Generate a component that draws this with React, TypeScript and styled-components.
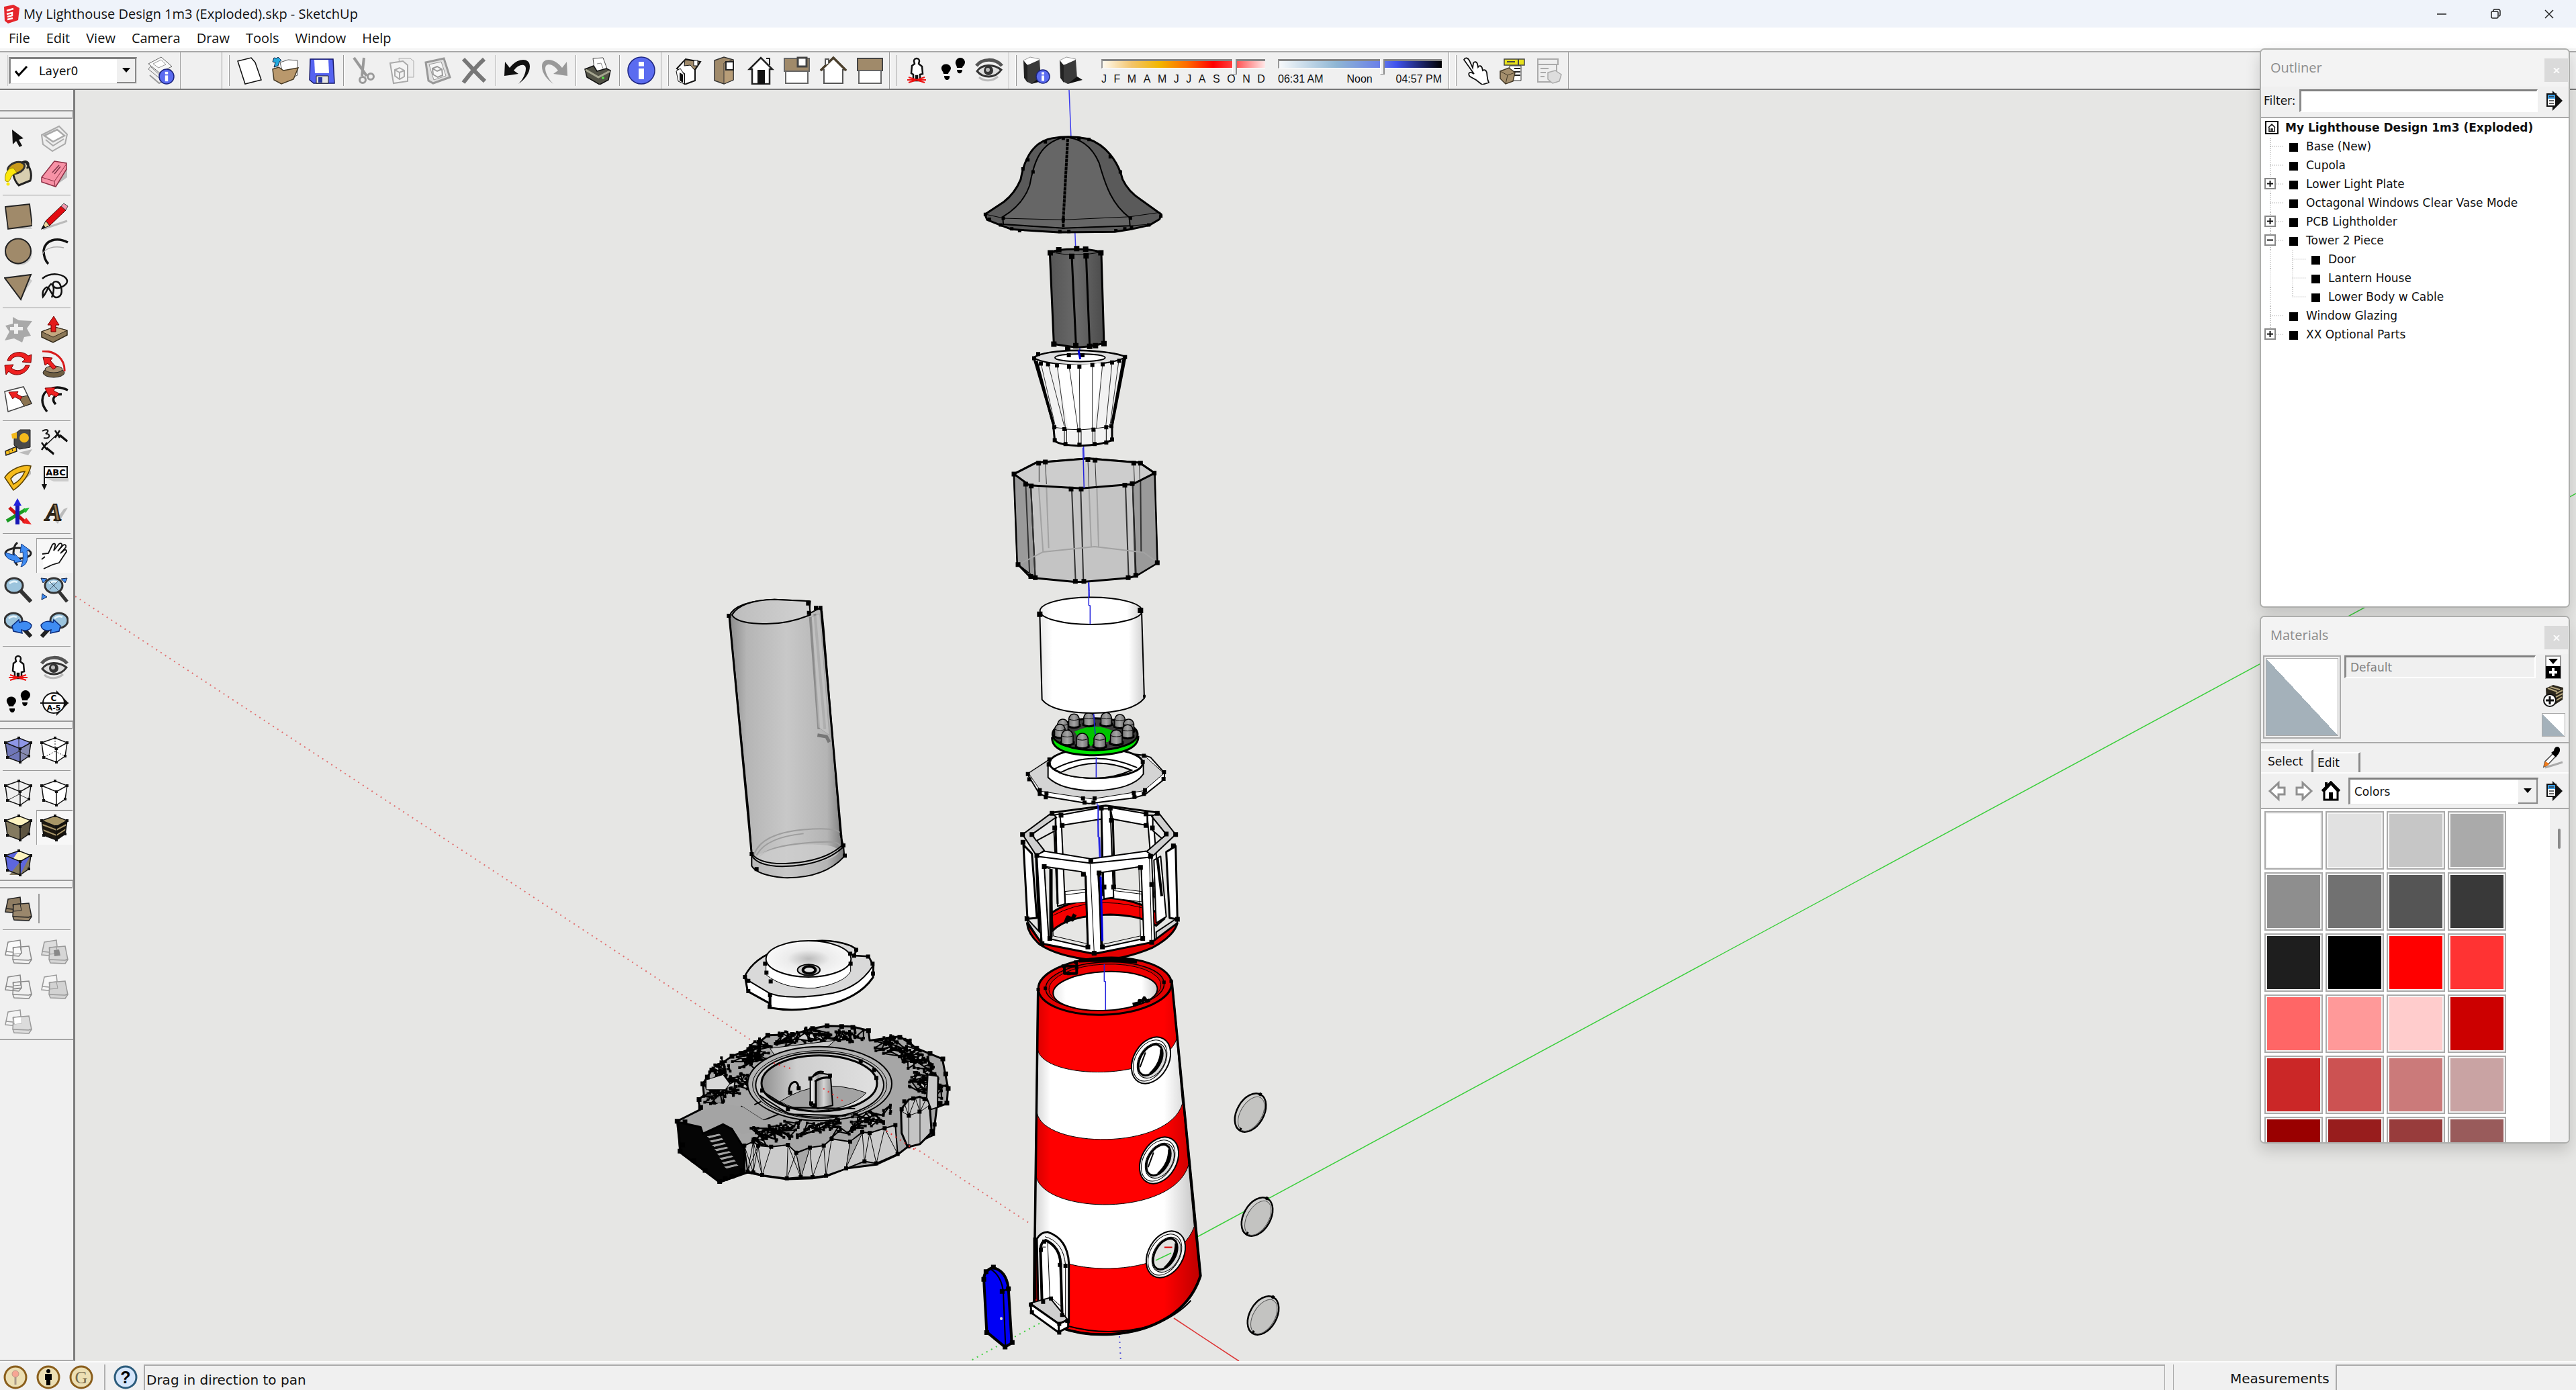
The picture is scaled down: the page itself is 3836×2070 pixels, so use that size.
import React from "react";
import styled, { createGlobalStyle } from "styled-components";

const ui = `"Open Sans", "Noto Sans", sans-serif`;
const dialog = `"DejaVu Sans", "Open Sans", sans-serif`;

const Global = createGlobalStyle`
  * { box-sizing: border-box; }
  html, body { margin: 0; padding: 0; }
  body { font-family: ${ui}; font-size: 19px; color: #111; background: #f0f0f0; overflow: hidden; }
  button { border: 0; padding: 0; margin: 0; background: none; font: inherit; color: inherit; display: flex; align-items: center; justify-content: center; }
  svg { display: block; flex: none; }
`;

/* ---------- shell ---------- */
const Shell = styled.div`
  position: relative;
  display: flex;
  flex-direction: column;
  height: 100vh;
`;
const TitleBar = styled.header`
  display: flex;
  align-items: center;
  height: 41px;
  padding-left: 5px;
  background: #eff3fa;
`;
const Title = styled.h1`
  flex: 1;
  margin: 0 0 0 6px;
  font-size: 20px;
  line-height: 28px;
  font-weight: 400;
`;
const WinButton = styled.button`
  width: 80px;
  height: 40px;
`;
const MenuBar = styled.nav`
  display: flex;
  gap: 24px;
  height: 31px;
  padding-left: 13px;
  align-items: center;
  background: #fff;
`;
const MenuItem = styled.button`
  font-size: 20px;
  line-height: 28px;
`;
const ToolStrip = styled.div`
  display: flex;
  height: 62px;
  padding-top: 2px;
  background: #f0f0f0;
  border-top: 4px solid #f5f5f5;
  border-bottom: 2px solid #777;
  box-shadow: inset 0 2px 0 #a8a8a8;
`;
const ToolGroup = styled.div`
  display: flex;
  align-items: center;
  padding-right: 2px;
  border-right: 1px solid #9a9a9a;
  box-shadow: 1px 0 0 #fff;
`;
const Grip = styled.span`
  align-self: stretch;
  width: 2px;
  margin: 4px 2px 4px 9px;
  background: #fff;
  border-right: 1px solid #9a9a9a;
`;
const ToolButton = styled.button`
  width: 54px;
  height: 52px;
`;
const Divider = styled.span`
  width: 1px;
  height: 46px;
  margin: 0 5px;
  background: #9a9a9a;
  box-shadow: 1px 0 0 #fff;
`;
const Spacer = styled.span`
  width: 8px;
`;
const EmptyDock = styled.div`
  width: 62px;
  border-right: 1px solid #9a9a9a;
`;
const Combo = styled.div<{ $w?: number }>`
  display: flex;
  align-items: center;
  width: ${(p) => (p.$w ? p.$w + "px" : "auto")};
  flex: ${(p) => (p.$w ? "none" : "1")};
  height: 40px;
  padding-left: 6px;
  background: #fff;
  border: 1px solid #e4e4e4;
  border-top: 3px solid #808080;
  border-left: 3px solid #909090;
`;
const ComboSelect = styled.select`
  appearance: none;
  flex: 1;
  min-width: 0;
  height: 34px;
  padding: 0;
  border: 0;
  background: transparent;
  font-family: ${dialog};
  font-size: 17px;
  color: #111;
`;
const ComboArrow = styled.span`
  display: flex;
  align-items: center;
  justify-content: center;
  width: 29px;
  align-self: stretch;
  background: #f0f0f0;
  border-right: 2px solid #8a8a8a;
  border-bottom: 2px solid #8a8a8a;
  pointer-events: none;
`;
const Check = styled.span`
  width: 36px;
`;
const SliderBlock = styled.div<{ $gap: number }>`
  display: flex;
  flex-direction: column;
  width: 244px;
  margin-left: ${(p) => p.$gap}px;
  padding-top: 4px;
`;
const Slider = styled.input<{ $grad: string }>`
  appearance: none;
  display: block;
  width: 100%;
  height: 22px;
  margin: 0;
  background: none;
  &::-webkit-slider-runnable-track {
    height: 14px;
    margin-bottom: 8px;
    background: linear-gradient(90deg, ${(p) => p.$grad});
    border-top: 3px solid #858585;
    border-left: 2px solid #999;
    border-bottom: 1px solid #fff;
  }
  &::-webkit-slider-thumb {
    appearance: none;
    width: 7px;
    height: 23px;
    margin-top: -3px;
    background: #f0f0f0;
    border-left: 1px solid #fff;
    border-right: 2px solid #8a8a8a;
    border-bottom: 1px solid #8a8a8a;
  }
`;
const SliderScale = styled.div`
  display: flex;
  justify-content: space-between;
  font-family: "Liberation Sans", Arial, sans-serif;
  font-size: 16px;
  line-height: 16px;
`;
const Workspace = styled.div`
  display: flex;
  flex: 1;
  min-height: 0;
`;
const Rail = styled.aside`
  width: 112px;
  flex: none;
  background: #f0f0f0;
  border-right: 3px solid #7d7d7d;
  border-bottom: 2px solid #aaa;
`;
const RailTop = styled.div`
  height: 30px;
`;
const RailGrip = styled.div`
  height: 15px;
  margin-bottom: 2px;
  border-top: 2px solid #9a9a9a;
  &::after {
    content: "";
    display: block;
    height: 9px;
    margin-right: 1px;
    border-bottom: 2px solid #9a9a9a;
    border-right: 1px solid #9a9a9a;
  }
`;
const RailRow = styled.div`
  display: flex;
  height: 52px;
`;
const RailButton = styled.button<{ $on?: boolean }>`
  width: 54px;
  height: 52px;
  background: ${(p) => (p.$on ? "#f7f7f7" : "none")};
  box-shadow: ${(p) => (p.$on ? "inset 1px 2px 0 #a0a0a0" : "none")};
`;
const RailRule = styled.div`
  height: 12px;
  margin: 0 4px;
  padding-top: 5px;
  &::after {
    content: "";
    display: block;
    height: 1px;
    background: #999;
  }
`;
const RailBar = styled.span`
  width: 2px;
  height: 44px;
  margin: 4px 0 0 3px;
  background: #999;
`;
const RailEnd = styled.div`
  border-top: 2px solid #a5a5a5;
`;
const Canvas = styled.main`
  flex: 1;
  min-width: 0;
  overflow: hidden;
  background: #e6e6e4;
  svg { width: 100%; height: 100%; }
`;
const StatusBar = styled.footer`
  display: flex;
  height: 43px;
  border-top: 2px solid #fbfbfb;
  padding: 3px 0 0 5px;
  background: #f0f0f0;
  font-family: ${dialog};
  font-size: 20px;
  line-height: 42px;
`;
const StatusButton = styled.button`
  width: 36px;
  height: 38px;
  margin-right: 13px;
`;
const StatusDivider = styled.span`
  width: 2px;
  margin: 0 12px 0 3px;
  background: #b0b0b0;
`;
const Hint = styled.output`
  flex: 1;
  margin-left: -4px;
  padding-left: 2px;
  border-left: 2px solid #aaa;
  border-top: 2px solid #aaa;
  border-right: 1px solid #aaa;
`;
const Measure = styled.label`
  display: flex;
  width: 600px;
  margin-left: 12px;
  padding-left: 84px;
  gap: 9px;
  border-left: 1px solid #aaa;
`;
const MeasureInput = styled.input`
  flex: 1;
  min-width: 0;
  background: #f0f0f0;
  border: 0;
  border-left: 2px solid #aaa;
  border-top: 2px solid #aaa;
`;

/* ---------- floating palettes ---------- */
const Palettes = styled.div`
  position: absolute;
  top: 72px;
  right: 9px;
  width: 462px;
  display: flex;
  flex-direction: column;
  gap: 12px;
  font-family: ${dialog};
  font-size: 17px;
`;
const Palette = styled.section<{ $h: number }>`
  display: flex;
  flex-direction: column;
  height: ${(p) => p.$h}px;
  overflow: hidden;
  background: #f0f0f0;
  border: 2px solid #adaeac;
  border-radius: 7px;
  box-shadow: 0 10px 22px rgba(0, 0, 0, 0.16);
`;
const PaletteHead = styled.div`
  display: flex;
  justify-content: space-between;
  height: 55px;
  flex: none;
  padding: 13px 1px 0 14px;
  background: #f3f3f3;
`;
const PaletteTitle = styled.h2`
  margin: 0;
  font-family: ${ui};
  font-weight: 400;
  font-size: 20px;
  line-height: 28px;
  color: #8c8c8c;
`;
const Close = styled.button`
  width: 35px;
  height: 35px;
  background: #dadada;
  color: #f7f7f7;
`;
const FilterRow = styled.div`
  display: flex;
  align-items: center;
  height: 47px;
  flex: none;
  padding: 0 9px 4px 4px;
  border-bottom: 2px solid #aaa;
`;
const FilterLabel = styled.label`
  display: flex;
  flex: 1;
  align-items: center;
  gap: 5px;
  margin-right: 13px;
`;
const Field = styled.input<{ $off?: boolean }>`
  flex: 1;
  min-width: 0;
  height: 34px;
  padding: 0 6px;
  background: ${(p) => (p.$off ? "#f0f0f0" : "#fff")};
  border: 2px solid #fff;
  border-top: 3px solid #808080;
  border-left: 3px solid #8a8a8a;
  font-family: ${dialog};
  font-size: 17px;
  color: ${(p) => (p.$off ? "#808080" : "#111")};
`;
const Tree = styled.ul`
  flex: 1;
  margin: 0;
  padding: 0;
  list-style: none;
  background: #fff;
`;
const Root = styled.li`
  display: flex;
  align-items: center;
  gap: 10px;
  height: 28px;
  padding-left: 6px;
  font-weight: 700;
`;
const Node = styled.li`
  display: flex;
  align-items: center;
  height: 28px;
`;
const Bullet = styled.span`
  width: 13px;
  height: 13px;
  margin: 3px 12px 0 8px;
  background: #000;
`;
const MatTop = styled.div`
  display: flex;
  height: 133px;
  flex: none;
  padding: 2px 5px 0 3px;
  border-bottom: 2px solid #aaa;
`;
const Preview = styled.div`
  width: 116px;
  height: 124px;
  padding: 2px;
  border: 2px solid #aaa;
  background: #f0f0f0;
`;
const Split = styled.div`
  width: 100%;
  height: 100%;
  border: 1px solid #aaa;
  background: linear-gradient(to top right, #a4b1ba 50%, #fff 50%);
`;
const NameSlot = styled.div`
  display: flex;
  flex: 1;
  align-items: flex-start;
  padding: 0 8px 0 5px;
`;
const SideIcons = styled.div`
  display: flex;
  flex-direction: column;
  align-items: center;
  gap: 8px;
  width: 36px;
`;
const MiniSplit = styled.button`
  width: 35px;
  height: 35px;
`;
const Tabs = styled.div`
  display: flex;
  align-items: flex-end;
  height: 45px;
  flex: none;
  border-bottom: 2px solid #fdfdfd;
`;
const Tab = styled.button<{ $on?: boolean }>`
  justify-content: flex-start;
  width: ${(p) => (p.$on ? 78 : 70)}px;
  height: ${(p) => (p.$on ? 34 : 30)}px;
  padding-left: ${(p) => (p.$on ? 10 : 6)}px;
  border-top: 2px solid #fdfdfd;
  border-right: 3px solid #8a8a8a;
`;
const Dropper = styled.button`
  width: 34px;
  height: 36px;
  margin: 0 6px 4px auto;
`;
const NavRow = styled.div`
  display: flex;
  align-items: center;
  height: 53px;
  flex: none;
  padding: 0 9px 0 10px;
  gap: 12px;
  border-bottom: 2px solid #aaa;
`;
const SwatchArea = styled.div`
  display: flex;
  flex: 1;
  min-height: 0;
  background: #fff;
`;
const SwatchGrid = styled.div`
  flex: 1;
  display: grid;
  grid-template-columns: repeat(4, 87px);
  grid-auto-rows: 87px;
  gap: 4px;
  padding: 3px 0 0 5px;
`;
const Swatch = styled.button<{ $c: string }>`
  background: ${(p) => p.$c};
  border: 2px solid #aaa;
  box-shadow: inset 0 0 0 2px #f4f4f4;
`;
const Scroll = styled.div`
  width: 28px;
  padding: 29px 0 0 12px;
  background: #f0f0f0;
  &::after {
    content: "";
    display: block;
    width: 4px;
    height: 30px;
    border-radius: 2px;
    background: #8a8a8a;
  }
`;

/* ---------- icons ---------- */
const K = "#111";
const tan = "#a08a6a";
const houseIso = (
  <>
    <path d="M4 18L17 4l22 4-8 12v16l-16 6V26z" fill="#fff" stroke={K} strokeWidth="2" />
    <path d="M16 5l22 3-8 12-6-7-9 1z" fill={tan} stroke={K} />
    <path d="M15 41V27L9 18 3 22l3 15z" fill="#fff" stroke={K} />
    <path d="M8 24l5 3v12l-5-3z" fill={K} />
    <path d="M29 6h6v8h-6z" fill="#fff" stroke={K} />
  </>
);
const foot = (
  <>
    <path d="M4 16c2-6 12-6 14 1 0 5-4 6-4 9H7c0-4-4-5-3-10zM8 29h8c1 8-8 8-8 0z" />
    <path d="M25 8c2-8 12-8 14 0 0 6-4 6-4 9h-8c0-4-3-5-2-9zM27 20h8c0 7-8 7-8 0z" />
  </>
);
const eye = (
  <>
    <path d="M2 14C10 3 30 2 40 14" fill="none" stroke="#555" strokeWidth="5" />
    <path d="M3 22C10 11 28 11 39 20 30 33 12 33 3 22z" fill="#ddd" stroke="#333" strokeWidth="3" />
    <circle cx="20" cy="21" r="7" fill="#333" /><circle cx="19" cy="20" r="3" fill="#bbb" />
    <path d="M6 31c8 7 20 6 28-1" fill="none" stroke="#bbb" strokeWidth="3" />
  </>
);
const person = (
  <>
    <path d="M17 7a4 4 0 018 0l-1 4 5 4 1 11-4 1v9h-4v-7h-2v7h-4v-9l-3-2 1-11 4-3z" fill="#fff" stroke={K} strokeWidth="2.5" />
    <path d="M9 39l24-8M9 31l24 8M7 35h28" stroke="#e11" strokeWidth="2" fill="none" />
  </>
);
const cube = (top: string, l: string, r: string, inner?: React.ReactNode) => (
  <>
    <path d="M2 11L24 4l16 7-16 9z" fill={top} /><path d="M2 11l22 9v20L5 33z" fill={l} /><path d="M24 20l16-9-3 20-13 9z" fill={r} />
    {inner}
    <path d="M2 11L22 4l18 7-16 9zM24 20v20L5 33 2 11M40 11l-3 20-13 9" fill="none" stroke={K} strokeWidth="1.5" />
    <path d="M0 9h4v4H0zM20 2h4v4h-4zM38 9h4v4h-4zM22 18h4v4h-4zM22 38h4v4h-4zM3 31h4v4H3zM35 29h4v4h-4z" fill={K} />
  </>
);
const slabs = (a: string, b: string, s: string, x?: React.ReactNode) => (
  <>
    <path d="M6 7l18-3 2 19-4 5-20-2 1-5z" fill={a} stroke={s} strokeWidth="1.5" />
    <path d="M14 15l23-2 4 20-4 6-22-1-2-5z" fill={b} stroke={s} strokeWidth="1.5" />
    <path d="M13 33l24 1 4-2M3 21l10 1" fill="none" stroke={s} strokeWidth="1.5" />
    <path d="M13 15l11-1 2 10-12 1z" fill="none" stroke={s} />
    {x}
  </>
);
const glass = (cx: number) => (
  <>
    <ellipse cx={cx} cy="14" rx="13" ry="11" fill="#9cc4dd" stroke="#333" strokeWidth="3" />
    <path d={`M${cx - 7} 11q5-5 12-2`} stroke="#e6f4fb" strokeWidth="2.5" fill="none" />
  </>
);
const info = (cx: number, cy: number, rx: number, ry: number) => (
  <>
    <ellipse cx={cx} cy={cy} rx={rx} ry={ry} fill="#5b6cf0" stroke="#1d2580" strokeWidth="1.5" />
    <rect x={cx - rx / 5} y={cy - ry * 0.65} width={rx / 2.5} height={ry / 3} fill="#fff" />
    <rect x={cx - rx / 5} y={cy - ry * 0.15} width={rx / 2.5} height={ry * 0.8} fill="#fff" />
  </>
);
const shadowBox = (
  <>
    <path d="M2 6l10-5 14 3-3 7-16 2z" fill="#fff" stroke="#999" /><path d="M2 6l6 7v26l-5-7z" fill="#222" />
    <path d="M8 13l18-8 2 28-14 8-6-3z" fill="#3a3a3a" /><path d="M14 41l22-6-8-5z" fill="#111" />
  </>
);
const icons: Record<string, React.ReactNode> = {
  layers: (<>
    <path d="M3 11L22 1l16 14-19 9z" fill="#f8f8f8" stroke="#666" /><path d="M3 19l17 14 19-10-4-4-16 8L6 15z" fill="#eee" stroke="#777" />
    <path d="M5 28l14 12 10-6" fill="none" stroke="#999" strokeWidth="2" /><path d="M10 11l12-6 7 7-11 5z" fill="#fff" stroke="#999" />{info(30, 30, 11, 11)}</>),
  newDoc: <path d="M4 7l20-5 6 7 9 26-24 6z" fill="#fff" stroke={K} strokeWidth="1.5" />,
  open: (<><path d="M13 9l12-4 14 1v22L20 36z" fill="#fff" stroke="#555" /><path d="M2 19l9-3 7 5 22-4-7 17-18 7L4 35z" fill="#b9986c" stroke="#463a25" strokeWidth="1.5" />
    <path d="M4 2l4 1 2-2 5 5-3 2-2 6-6 2 2-7-4-1z" fill="#23a9dd" stroke="#124" /></>),
  save: (<><path d="M4 4h34l2 36H9l-6-5z" fill="#5563f0" stroke="#15186b" strokeWidth="1.5" /><path d="M10 5h21l1 20H11z" fill="#fff" /><path d="M13 29h18v11H13z" fill="#e6e6e6" stroke="#222" /><path d="M16 31h6v8h-6z" fill="#2a38a0" /></>),
  cut: (<g stroke="#999" fill="none"><path d="M4 2l19 27M19 2l-3 27" strokeWidth="4" /><circle cx="17" cy="35" r="4.500" strokeWidth="3" /><circle cx="29" cy="30" r="4.500" strokeWidth="3" /></g>),
  copy: (<g stroke="#aaa" fill="#eee"><path d="M17 3h17l5 4v24H20z" /><path d="M4 10l19-3 7 6v24l-21 3z" fill="#f4f4f4" strokeWidth="2" /><path d="M11 20l7-3 7 4v9l-7 4-7-5zM11 20l7 4 7-3M18 24v9" fill="none" strokeWidth="2" /></g>),
  paste: (<g stroke="#999" fill="#e0e0e0"><path d="M3 9l27-6 9 28-25 9-7-4z" strokeWidth="3" /><path d="M8 12l18-4 7 21-18 6z" fill="#f6f6f6" /><path d="M13 18l7-3 7 4 1 9-7 3-7-4zM13 18l7 4 7-3" fill="none" strokeWidth="2" /></g>),
  del: <path d="M5 4c10 10 20 22 32 33M36 4C25 14 15 26 5 39" stroke="#777" strokeWidth="6" fill="none" />,
  undo: <path d="M9 17C20 2 39 1 39 15c0 10-8 20-17 26 8-8 11-17 11-23 0-8-11-7-18 3l7 5L1 29 2 8z" fill={K} />,
  redo: <path d="M33 17C22 2 3 1 3 15c0 10 8 20 17 26C12 33 8 24 8 18c0-9 11-8 19 3l-7 5 21 3-1-21z" fill="#999" />,
  print: (<><path d="M14 3l15-1 7 19-19 4z" fill="#fff" stroke="#444" /><path d="M20 11l6-1 3 8" stroke="#888" fill="none" /><path d="M2 19l13-5 5 8 14-4 6 3-3 14-13 7L5 31z" fill="#525246" stroke="#111" strokeWidth="1.5" /><path d="M3 20l19 11 17-9" fill="none" stroke="#a5a58f" strokeWidth="3" /><circle cx="29" cy="32" r="2" fill="#5d4" /></>),
  info: info(21, 21, 20, 20),
  iso: houseIso,
  top: (<><path d="M6 6l14-5 14 4v30l-14 6-14-5z" fill={tan} stroke="#333" strokeWidth="1.500" /><path d="M20 10l14-5v30l-14 6z" fill="#b79d78" stroke="#333" /><path d="M23 8h11v12H23z" fill="#fff" stroke="#222" strokeWidth="2" /></>),
  front: (<><path d="M4 19L21 2l17 17h-4v22H8V19z" fill="#fff" stroke="#222" strokeWidth="2.500" /><path d="M16 20h11v21H16z" fill={K} /><path d="M29 3h5v10" fill="none" stroke="#222" strokeWidth="2" /></>),
  right: (<><path d="M2 3h37v19H2z" fill={tan} stroke="#666" strokeWidth="2" /><path d="M4 22h33v18H4z" fill="#fff" stroke="#666" strokeWidth="2" /><path d="M22 2h13v13H22z" fill="#fff" stroke="#444" strokeWidth="3" /></>),
  back: (<><path d="M3 20L21 2l18 18h-4v20H7V20z" fill="#fff" stroke="#555" strokeWidth="2" /><path d="M2 21L21 2l19 19" fill="none" stroke="#4b3f2c" strokeWidth="3.500" /><path d="M9 13V4h5v6" fill="#fff" stroke="#555" strokeWidth="2" /></>),
  left: (<><path d="M3 3h37v18H3z" fill={tan} stroke="#444" strokeWidth="2" /><path d="M5 21h33v19H5z" fill="#fff" stroke="#666" strokeWidth="2" /></>),
  person, foot, eye,
  shadowInfo: <>{shadowBox}{info(31, 30, 10, 10)}</>,
  shadow: shadowBox,
  interact: <path d="M3 5c2-4 6-3 8 1l5 11 1-7c2-3 5-2 6 1l1 5c2-3 5-2 6 1l1 4c3-2 5 0 6 3 1 6 0 9 3 15l-10 3-9-7-9-5c-3-3-2-7 2-6l4 2z" fill="#fff" stroke={K} strokeWidth="1.800" />,
  attrs: (<><path d="M9 4h30v9H9z" fill="#e7e11d" stroke="#444" strokeWidth="1.500" /><path d="M30 4v9M13 8h12" stroke="#444" strokeWidth="2" /><path d="M17 14h17v22H17z" fill="#fff" stroke="#333" /><path d="M24 18h9M24 23h9M24 28h9" stroke="#222" strokeWidth="2" /><path d="M3 22l13-5 9 7-3 13-11 4-8-8z" fill="#a58f6d" stroke="#443a28" strokeWidth="1.500" /><path d="M3 22l11 6 11-4M14 28l-3 13" stroke="#443a28" fill="none" /></>),
  outline: (<g stroke="#aaa" fill="#eee"><path d="M5 4h30v8H5z" strokeWidth="2" /><path d="M5 12h28v26H5z" strokeWidth="2" /><path d="M9 18h12M9 24h8M9 30h6" strokeWidth="2" /><path d="M20 24l11-3 9 6-3 10-10 3-7-6z" fill="#ddd" strokeWidth="1.500" /></g>),
  arrow: <path d="M12 7l17 13-7 2 5 9-4 2-5-9-5 5z" fill={K} />,
  component: (<g fill="#fff" stroke="#aaa"><path d="M2 15L28 2l12 12-3 14-19 11L4 29z" strokeWidth="2" fill="#eee" /><path d="M6 16L25 7l11 9-17 9z" strokeWidth="2.500" /><path d="M8 22l11 9 16-10" fill="none" strokeWidth="2" /></g>),
  paint: (<><path d="M14 8l18-5c8 9 10 20 7 28l-17 7C14 30 12 18 14 8z" fill="#d8cfb0" stroke="#222" strokeWidth="3" /><ellipse cx="18" cy="12" rx="13" ry="8" transform="rotate(-20 18 12)" fill="#c99a1c" stroke="#333" strokeWidth="3" /><path d="M14 12C4 12 0 24 2 31c3 3 6 2 8-4 2-5 5-6 9-8z" fill="#fbe70d" stroke="#998900" /><circle cx="6" cy="36" r="2.500" fill="#fbe70d" /><path d="M26 4c8-4 14 0 8 9" fill="none" stroke="#222" strokeWidth="2.500" /></>),
  eraser: (<><path d="M22 39l18-13V12z" fill="#bbb" /><path d="M2 26L21 2l18 3v9L23 40 2 33z" fill="#f792a6" stroke="#8d2f44" strokeWidth="1.500" /><path d="M2 26l19 6L39 6M21 32l1 8" fill="none" stroke="#8d2f44" /><path d="M18 19l10-11M21 21l9-11" stroke="#7d3548" strokeWidth="1.500" /></>),
  rect: (<><path d="M8 39h34l-3-4z" fill="#ccc" /><path d="M2 6l36-4 4 32-36 5z" fill={tan} stroke="#222" strokeWidth="1.800" /></>),
  pencil: (<><path d="M4 39l36-12" stroke="#bbb" strokeWidth="3" /><path d="M8 27L31 5l7 6-24 23z" fill="#e30c12" stroke="#400" /><path d="M31 5l4-4 6 4-3 6z" fill="#f19ab0" stroke="#444" /><path d="M8 27l6 7-12 5z" fill="#ecd59b" stroke="#222" /><path d="M1 40l7-3-3-4z" fill={K} /></>),
  circle: <><ellipse cx="23" cy="23" rx="19" ry="18" fill="#ccc" /><ellipse cx="21" cy="20" rx="19" ry="18.500" fill={tan} stroke="#222" strokeWidth="2" /></>,
  arc: <><path d="M41 7C24-2 7 4 5 19c0 9 2 15 7 20" fill="none" stroke={K} strokeWidth="3.500" /><path d="M3 25c4-10 18-13 32-10" stroke="#aaa" fill="none" strokeWidth="1.500" /></>,
  poly: <><path d="M28 33l14-21-5-4z" fill="#ccc" /><path d="M1 8l39-5-15 37z" fill={tan} stroke="#222" strokeWidth="2" /></>,
  freehand: <path d="M3 9C16-2 38 2 40 12c1 8-18 16-21 7-2-7 8-8 11 0 4 10 1 18-7 18-6-1-9-17-14-15-5 3-6 9-5 14 5-6 8-16 12-19 6 2 4 14 1 20" fill="none" stroke={K} strokeWidth="2.500" />,
  move: <path d="M13 2l9 5 20 1-8 11 6 11-10 2-3 8-12-6-14 3 7-13-6-9 11-3zM15 12h6v5h7v5h-7v5h-6v-5H9v-5h6z" fill="#a9a9a9" fillRule="evenodd" />,
  push: (<><path d="M2 24l19-7 19 5v7l-21 11L2 32z" fill="#8b7757" stroke="#332a1a" strokeWidth="1.500" /><path d="M2 24l19-7 19 5-21 10z" fill="#c4a880" stroke="#332a1a" /><path d="M20 1l8 13h-5v10h-7V14h-5z" fill="#e31b1b" stroke="#700" /></>),
  rotate: (<><path d="M5 15C9 0 29 0 36 8l5-2-1 12-13-1 4-4C24 6 13 8 10 15z" fill="#ee2020" stroke="#700" /><path d="M38 22C33 37 15 40 7 31l-4 5-2-14 13-1-3 5c6 6 18 5 21-4z" fill="#ee2020" stroke="#700" /></>),
  follow: (<><ellipse cx="20" cy="33" rx="16" ry="7" fill="#6f5e42" stroke="#222" /><ellipse cx="20" cy="28" rx="13" ry="5" fill="#a89070" stroke="#222" /><path d="M3 1c20-1 34 12 33 30" stroke="#d81b1b" strokeWidth="3" fill="none" /><path d="M4 10l14 1-3 4 9 10-5 3-8-9-4 3z" fill="#ee2020" stroke="#700" /></>),
  scale: (<><path d="M1 9l28-7 12 25-35 12z" fill="#fff" stroke="#444" strokeWidth="1.500" /><path d="M22 18l13-3 6 12-11 4z" fill="#8b7451" stroke="#222" /><path d="M7 10l14-1-2 4 8 4-3 4-8-4-3 3z" fill="#ee2020" stroke="#700" /></>),
  offset: (<><path d="M41 7C20-3 3 8 3 22c0 7 3 12 7 17M32 13c-12 0-16 8-9 15" fill="none" stroke={K} strokeWidth="3.500" /><path d="M7 4l15-1-2 5 8 4-4 5-8-4-3 4z" fill="#ee2020" stroke="#700" /></>),
  tape: (<><path d="M22 36l20-5-6 9z" fill="#bbb" /><path d="M15 9l9-7h15v26l-16 3-8-6z" fill="#4a4a4a" stroke="#222" /><circle cx="30" cy="14" r="7" fill="#f5ba1c" /><path d="M11 8l8-2v9h-7z" fill="#f5ba1c" /><path d="M2 34l16-7 1 7-16 6z" fill="#f9c01c" stroke="#222" strokeWidth="1.500" /><path d="M7 33l1 3M12 31l1 3" stroke="#222" /></>),
  dimension: (<><path d="M3 4c7-4 12-1 5 4 8-1 7 9-3 6" fill="none" stroke={K} strokeWidth="2" /><path d="M6 27L26 8l14 12M6 27l14 12" fill="none" stroke={K} strokeWidth="1.500" /><path d="M29 10l11 9M9 29l11 9" stroke={K} strokeWidth="3.500" /><path d="M22 3l7 11M29 3l-7 11M2 21l8 11M10 21l-8 11" stroke={K} strokeWidth="2.500" /></>),
  protractor: (<><path d="M18 37l22-21v-5z" fill="#bbb" /><path d="M14 40L1 21C8 10 26 1 40 4 37 18 26 32 14 40zm0-9c8-4 14-12 17-19-9 1-17 5-21 11z" fill="#f5bb1c" fillRule="evenodd" stroke="#5a4100" strokeWidth="1.500" /></>),
  text: (<><path d="M8 22h34v5H20z" fill="#ccc" /><path d="M6 5h34v16H6z" fill="#fff" stroke={K} strokeWidth="2" /><path d="M6 21v12" stroke={K} strokeWidth="2" /><path d="M2 31h8l-4 9z" fill={K} /><text x="23" y="18" fontSize="13" fontWeight="700" textAnchor="middle" fontFamily="DejaVu Sans">ABC</text></>),
  axes: (<><path d="M8 14l24 22" stroke="#c11" strokeWidth="5" /><path d="M41 39l-14-2 6-8z" fill="#e22" /><path d="M4 34l28-17" stroke="#1a9a22" strokeWidth="5" /><path d="M38 14l-6 8-4-6z" fill="#2b3" /><path d="M20 8v31" stroke="#1717b5" strokeWidth="6" /><path d="M20 0l6 11H14z" fill="#22d" /></>),
  text3d: (<><path d="M26 38l15-24-6 2-13 18z" fill="#bbb" /><text x="20" y="33" fontSize="36" fontWeight="700" fontStyle="italic" textAnchor="middle" fontFamily="Liberation Serif" fill="#9c7e54" stroke="#2a2216" strokeWidth="2">A</text></>),
  orbit: (<><ellipse cx="21" cy="18" rx="19" ry="8" fill="none" stroke="#222" strokeWidth="3" /><path d="M20 2c-8 6-8 26 0 34" fill="none" stroke="#222" strokeWidth="3" /><path d="M2 17l14 4-2-4 13 13-12 2 1-3C7 28 2 24 2 17z" fill="#3f8cf3" stroke="#113b86" /><path d="M26 4l12 9-4 1c3 12 0 22-9 24 3-6 4-14 3-22l-4 1z" fill="#3f8cf3" stroke="#113b86" /></>),
  pan: <path d="M3 19l9-1 6-13c3-3 5-1 4 2L20 14 28 4c3-2 5 0 4 3l-6 8L34 6c3-2 5 0 4 3l-8 9 6-5c3-1 4 2 2 4L28 32l-10 3-13 6M2 27l5-4" fill="#fff" stroke={K} strokeWidth="1.800" />,
  zoom: <><path d="M25 22l15 16" stroke="#333" strokeWidth="6" />{glass(15)}</>,
  zoomExt: <><path d="M27 22l13 16" stroke="#333" strokeWidth="5" />{glass(20)}<path d="M14 8l12 12M26 8L14 20" stroke="#456" /><path d="M1 3l9 1-6 6zM40 3l-9 1 6 6zM2 35l1-9 7 5z" fill="#3f8cf3" stroke="#124" /></>,
  prev: <><path d="M25 22l15 16" stroke="#222" strokeWidth="6" />{glass(14)}<path d="M12 22l10-9 1 4c7-3 14-2 18 4-1 8-9 9-15 7l1 5-13-3z" fill="#3f8cf3" stroke="#0b2c7c" strokeWidth="1.500" /></>,
  next: <><path d="M17 22L2 38" stroke="#222" strokeWidth="6" />{glass(28)}<path d="M30 22L20 13l-1 4C12 14 5 15 1 21c1 8 9 9 15 7l-1 5 13-3z" fill="#3f8cf3" stroke="#0b2c7c" strokeWidth="1.500" /></>,
  section: (<><path d="M24 2l18 19-18 19z" fill={K} /><ellipse cx="20" cy="21" rx="16" ry="15" fill="#fff" stroke={K} strokeWidth="2" /><path d="M0 21h42" stroke={K} strokeWidth="2" /><text x="20" y="18" fontSize="12" fontWeight="700" textAnchor="middle" fontFamily="DejaVu Sans">C</text><text x="20" y="32" fontSize="11" fontWeight="700" textAnchor="middle" fontFamily="DejaVu Sans">A-5</text></>),
  xray: cube("#8f97e6", "#6f76b8", "#8589b0", <path d="M22 4v20L5 33M22 24l15 7" stroke="#333" fill="none" />),
  backEdges: cube("#fff", "#fff", "#fff", <path d="M22 4v20L5 33M22 24l15 7" stroke="#333" fill="none" strokeDasharray="2 2" />),
  wire: cube("none", "none", "none", <path d="M22 4v20L5 33M22 24l15 7" stroke="#333" fill="none" />),
  hidden: cube("#fff", "#fff", "#fff"),
  shaded: cube("#fdf3c0", "#847a60", "#5d5440"),
  textured: cube("#a99767", "#1d1810", "#16120b", <path d="M3 17l21 8 15-8M4 25l20 8 14-9" stroke="#a8966a" strokeWidth="2" fill="none" />),
  mono: cube("#fdf3c0", "#5d66dd", "#847a60", <><path d="M3 11l19-7-8 11zM24 20v20L39 11z" fill="#5d66dd" /><path d="M24 20v20H8z" fill="#847a60" /></>),
  outer: slabs("#8e7c62", "#9a876c", "#222"),
  s1: slabs("#fafafa", "none", "#888"),
  s2: slabs("#ddd", "#d6d6d6", "#999", <path d="M20 19l8-1 2 9-9 1z" fill="#888" />),
  s3: slabs("none", "none", "#888", <path d="M14 20l12-1M15 24l11-1" stroke="#888" />),
  s4: slabs("#f6f6f6", "#d3d3d3", "#999"),
  s5: slabs("#f4f4f4", "#dcdcdc", "#999", <path d="M15 16l10-1 1 9-10 1z" fill="#fff" />),
};
const Icon = ({ n }: { n: string }) => (
  <svg width="42" height="42" viewBox="0 0 42 42" aria-hidden="true">{icons[n]}</svg>
);
const Tool = ({ n }: { n: string }) => <ToolButton aria-label={n}><Icon n={n} /></ToolButton>;
const Arrow = () => <svg width="12" height="8" viewBox="0 0 12 8"><path d="M0 0h12L6 7z" /></svg>;
const Details = () => (
  <svg width="24" height="30" viewBox="0 0 24 30">
    <path d="M9 0l15 15L9 30z" fill="#111" /><path d="M1 5h13v18H1z" fill="#fff" stroke="#111" strokeWidth="2" />
    <path d="M2 6h11v6H2z" fill="#3a9be0" /><path d="M4 9h7M4 15h7M4 19h7" stroke="#333" strokeWidth="1.500" />
  </svg>
);
const CloseMark = () => <svg width="10" height="8" viewBox="0 0 10 8"><path d="M1 0l8 8M9 0L1 8" stroke="#fafafa" strokeWidth="2" /></svg>;

/* ---------- model scene ---------- */
const V = { vectorEffect: "non-scaling-stroke" as const };
type LProps = { d: string; f?: string; s?: string; w?: number; dash?: string; o?: number };
const L = ({ d, f = "none", s = "#000", w = 1, dash, o }: LProps) => (
  <path d={d} fill={f} stroke={s} strokeWidth={w} strokeDasharray={dash} opacity={o} strokeLinejoin="round" {...V} />
);
const Dots = ({ p, w = 6 }: { p: string; w?: number }) => (
  <path d={p.trim().split(/\s+/).map((q) => `M${q.replace(",", " ")}h.01`).join("")} stroke="#000" strokeWidth={w} strokeLinecap="square" fill="none" {...V} />
);

const rocks = (line: number[][], half: number, count: number, seed: number) => {
  let r = seed;
  const rnd = () => ((r = (r * 16807) % 2147483647) / 2147483647);
  for (let i = 0; i < 5; i++) rnd();
  const out: { d: string; f: string; v: string }[] = [];
  for (let i = 0; i < count; i++) {
    const t = rnd() * (line.length - 1);
    const k = Math.floor(t);
    const a = line[k], b = line[Math.min(k + 1, line.length - 1)];
    const x = a[0] + (b[0] - a[0]) * (t - k);
    const y = a[1] + (b[1] - a[1]) * (t - k) + (rnd() - 0.5) * 2 * half;
    const q = [0, 1, 2].map(() => [Math.round(x + (rnd() - 0.5) * 84), Math.round(y + (rnd() - 0.5) * 30)]);
    out.push({
      d: `M${q[0]}L${q[1]}L${q[2]}Z`,
      f: ["#a0a0a0", "#b8b8b8", "#cecece", "#8e8e8e"][Math.floor(rnd() * 4)],
      v: q.map((c) => c.join(",")).join(" "),
    });
  }
  return out;
};
const Rocks = ({ line, half, count, seed }: { line: number[][]; half: number; count: number; seed: number }) => {
  const list = rocks(line, half, count, seed);
  return (<>
    {list.map((t, i) => <L key={i} d={t.d} f={t.f} w={2} />)}
    <Dots p={list.map((t) => t.v).join(" ")} w={4} />
  </>);
};

const topPts = [[385, 1442], [425, 1432], [447, 1442], [505, 1445], [580, 1440], [617, 1460], [678, 1447], [740, 1442], [775, 1425], [858, 1432], [912, 1408], [945, 1410], [1012, 1398], [1060, 1390]];
const botPts = [[400, 1508], [425, 1510], [465, 1517], [575, 1525], [637, 1522], [690, 1522], [750, 1518], [840, 1500], [922, 1482], [975, 1487], [1070, 1463]];
const zig = () => {
  let d = "";
  botPts.forEach((b) => {
    topPts.forEach((t) => { if (Math.abs(t[0] - b[0]) < 62) d += `M${t}L${b}`; });
  });
  return d;
};

const Base = () => (
  <g>
    <L d="M85 1380L190 1350 178 1325 205 1315 200 1285 240 1250 330 1215 405 1198 450 1180 490 1162 600 1160 690 1145 755 1138 870 1140 940 1150 945 1175 1040 1168 1080 1165 1155 1195 1270 1222 1295 1295 1290 1335 1245 1345 1230 1415 1115 1445 1070 1465 975 1490 840 1500 750 1520 690 1525 575 1527 465 1518 400 1510 275 1535 100 1460Z" f="#a6a6a6" w={3} />
    <Rocks line={[[235, 1298], [280, 1255], [400, 1220], [470, 1192]]} half={20} count={48} seed={1193} />
    <Rocks line={[[520, 1178], [640, 1162], [780, 1158], [900, 1162]]} half={8} count={36} seed={3141} />
    <Rocks line={[[1000, 1190], [1080, 1190], [1170, 1225], [1240, 1262]]} half={16} count={44} seed={5771} />
    <Rocks line={[[1140, 1285], [1180, 1275], [1250, 1300]]} half={18} count={22} seed={7727} />
    <Rocks line={[[225, 1320], [300, 1302], [390, 1275]]} half={12} count={26} seed={9311} />
    <L d="M500 1195L790 1175 760 1190 520 1212Z" f="#cacaca" />
    <L d="M215 1275L290 1262 320 1285 300 1300 215 1300Z" f="#d8d8d8" />
    <ellipse cx="722" cy="1285" rx="322" ry="94" fill="#b3b3b3" stroke="#000" strokeWidth="2" {...V} />
    <ellipse cx="722" cy="1287" rx="300" ry="86" fill="none" stroke="#000" strokeWidth="1" {...V} />
    <ellipse cx="722" cy="1288" rx="286" ry="82" fill="#c8c8c8" stroke="#000" strokeWidth="2" {...V} />
    <ellipse cx="720" cy="1284" rx="258" ry="71" fill="url(#well)" stroke="#000" strokeWidth="3" {...V} />
    <path d="M545 1330Q720 1265 930 1308Q860 1350 700 1354Q600 1350 545 1330Z" fill="#a3a3a3" stroke="#000" {...V} />
    <L d="M680 1270L720 1258 770 1262 780 1340 712 1348 680 1340Z" f="url(#peg)" w={2} />
    <L d="M690 1268q20-18 50-12M705 1278v66M700 1280q30-14 72-10M585 1305q0-20 20-24t24 18" w={3} />
    <Dots p="680,1272 684,1335 768,1264 590,1308 628,1296 465,1302 905,1228 965,1250 975,1270 580,1350 700,1340" />
    <L d="M460 1302L580 1345 880 1348M455 1315L585 1362 840 1366" s="#000" w={2} />
    <L d="M370 1342L470 1378 540 1362M430 1338L460 1330" w={2} />
    <L d="M150 1370L270 1335 380 1345 470 1378 515 1375 480 1400 375 1412 310 1388 230 1398 160 1385Z" f="#a4a4a4" s="#a4a4a4" />
    <L d="M90 1382L190 1395 200 1412 290 1388 330 1400 385 1450 385 1510 275 1535 98 1458Z" f="#050505" w={3} />
    {[0, 1, 2, 3, 4, 5, 6, 7].map((i) => (
      <L key={i} d={`M${215 + i * 11} ${1418 + i * 11}l58 -7 12 5 -56 8z`} f="#a2a2a2" />
    ))}
    <Rocks line={[[430, 1422], [560, 1405], [700, 1402], [880, 1390], [1030, 1352]]} half={14} count={60} seed={1949} />
    <L d={`M${topPts.join("L")}L${[...botPts].reverse().join("L")}Z`} f="#cbcbcb" w={2} />
    <L d={zig()} />
    <L d="M858 1432L912 1410 840 1498ZM617 1462L678 1448 640 1520Z" f="#a8a8a8" />
    <Dots p={[...topPts, ...botPts].map((p) => p.join(",")).join(" ")} />
    <L d="M1085 1350L1120 1325 1170 1318 1212 1330 1222 1408 1170 1438 1115 1446 1088 1410Z" f="#c4c4c4" w={3} />
    <L d="M1120 1330V1444M1170 1320V1438M1088 1355L1120 1366 1170 1356 1212 1340M1100 1335L1120 1366 1150 1322 1170 1356 1195 1326" />
    <Dots p="1120,1366 1168,1356 1215,1345 1222,1405 1228,1412 1118,1444 1235,1388 1088,1350 1100,1330 1140,1322 1190,1324" />
    <L d="M1205 1262L1250 1266 1248 1345 1220 1350 1200 1320Z" f="#c9c9c9" w={2} />
    <Dots p="85,1380 98,1456 275,1533 300,1526 330,1520 375,1505 110,1440 160,1480 210,1505 120,1382 200,1285 220,1268 240,1250 285,1232 330,1215 370,1208 405,1198 450,1180 490,1162 545,1161 600,1160 690,1145 755,1138 820,1140 870,1142 940,1150 1045,1168 1080,1167 1120,1180 1155,1195 1215,1208 1272,1222 1285,1260 1296,1297 1290,1334 183,1325 190,1345 1260,1335" w={7} />
  </g>
);

const Porthole = ({ x, y, see }: { x: number; y: number; see?: boolean }) => (
  <g transform={`translate(${x} ${y}) rotate(-60)`} stroke="#000">
    <ellipse rx="37" ry="26" fill="#f3f3f3" strokeWidth="2" />
    <ellipse cx="-1" cy="-1" rx="33" ry="22" fill="#fff" strokeWidth="1" />
    <ellipse cx="0" cy="1" rx="28" ry="19" fill="#d9d9d9" strokeWidth="1" />
    <ellipse cx="0" cy="-1" rx="25" ry="15" fill={see ? "#e2e2e0" : "#fff"} strokeWidth="3" />
    <path d="M-18 9Q4 16 22 5" fill="none" strokeWidth="4" />
    {see ? <path d="M8 -7L14 3" stroke="#d00" strokeWidth="2" /> : <path d="M-17 -9L6 -13" strokeWidth="2" />}
  </g>
);
const Disc = ({ x, y }: { x: number; y: number }) => (
  <g transform={`translate(${x} ${y}) rotate(-60)`} stroke="#000">
    <ellipse rx="31" ry="20" fill="#cfcfcd" strokeWidth="2.500" />
    <ellipse cx="-1" cy="2" rx="28" ry="16" fill="#c3c3c1" stroke="#555" strokeWidth="1" />
    <path d="M-29 -2v3M31 -3v4" strokeWidth="5" />
  </g>
);

const led = (x: number, y: number, s = 1) => (
  <g key={`${x}-${y}`} transform={`translate(${x} ${y}) scale(${s})`}>
    <path d="M-30 22Q0 36 30 22V14H-30Z" fill="#666" stroke="#000" strokeWidth="2" {...V} />
    <path d="M-26 -12Q-20 -32 0 -32T26 -12V20Q0 30 -26 20Z" fill="url(#led)" stroke="#000" strokeWidth="1.500" {...V} />
    <path d="M-26 -10Q0 0 26 -10" fill="none" stroke="#000" {...V} />
  </g>
);

const Scene = () => (
  <svg viewBox="112 134 3724 1893" preserveAspectRatio="xMinYMin slice" role="img" aria-label="Exploded lighthouse model">
    <defs>
      <linearGradient id="glass"><stop offset="0" stopColor="#8b8b8b" /><stop offset=".15" stopColor="#b5b5b5" /><stop offset=".5" stopColor="#c8c8c8" /><stop offset=".85" stopColor="#b4b4b4" /><stop offset="1" stopColor="#777" /></linearGradient>
      <linearGradient id="glassIn"><stop offset="0" stopColor="#bdbdbd" /><stop offset="1" stopColor="#d2d2d2" /></linearGradient>
      <linearGradient id="white"><stop offset="0" stopColor="#e8e8e8" /><stop offset=".12" stopColor="#fff" /><stop offset=".85" stopColor="#fff" /><stop offset="1" stopColor="#cfcfcf" /></linearGradient>
      <linearGradient id="well"><stop offset="0" stopColor="#8f8f8f" /><stop offset=".3" stopColor="#cecece" /><stop offset="1" stopColor="#e0e0e0" /></linearGradient>
      <linearGradient id="peg"><stop offset="0" stopColor="#fff" /><stop offset=".35" stopColor="#999" /><stop offset=".6" stopColor="#d5d5d5" /><stop offset="1" stopColor="#8a8a8a" /></linearGradient>
      <linearGradient id="led"><stop offset="0" stopColor="#777" /><stop offset=".5" stopColor="#a5a5a5" /><stop offset="1" stopColor="#6a6a6a" /></linearGradient>
      <linearGradient id="dark"><stop offset="0" stopColor="#555" /><stop offset=".5" stopColor="#6a6a6a" /><stop offset="1" stopColor="#4b4b4b" /></linearGradient>
      <linearGradient id="shade"><stop offset="0" stopColor="#000" stopOpacity=".18" /><stop offset=".1" stopColor="#000" stopOpacity="0" /><stop offset=".78" stopColor="#000" stopOpacity="0" /><stop offset="1" stopColor="#000" stopOpacity=".26" /></linearGradient>
      <radialGradient id="dish"><stop offset="0" stopColor="#bbb" /><stop offset=".5" stopColor="#ececec" /><stop offset="1" stopColor="#f8f8f8" /></radialGradient>
    </defs>

    <path d="M112 888L980 1458 1532 1821" stroke="#e07070" strokeWidth="2" strokeDasharray="2 6" fill="none" />
    <path d="M1781 1843L3836 735" stroke="#3ccf3c" strokeWidth="1.500" fill="none" />
    <path d="M1555 1967L1444 2027" stroke="#3ccf3c" strokeWidth="2" strokeDasharray="2 6" />
    <path d="M1748 1963L1845 2027" stroke="#d33" strokeWidth="1.500" />
    <path d="M1667 1990L1669 2027" stroke="#55d" strokeWidth="2" strokeDasharray="2 6" />
    <path d="M1592 134L1608 520 1622 880 1632 1158 1640 1338" stroke="#3a3aee" strokeWidth="1.500" fill="none" />

    {/* glass liner, lid and rocky base on the left */}
    <g transform="translate(980 860) scale(.33333 .58673)">
      <L d="M318 98Q345 60 520 56L680 60 675 92 720 78 732 85 740 130 815 655 828 680 832 708Q740 765 560 762 440 755 418 732V702L405 600Z" f="url(#glass)" w={2} />
      <L d="M330 95Q370 58 520 56L675 60 680 95Q560 122 450 117 350 115 330 95Z" f="url(#glassIn)" w={2} />
      <L d="M680 100L718 385M700 92L745 385" s="#8a8a8a" w={4} /><L d="M712 400L752 404 765 418" s="#777" w={5} />
      <L d="M685 100L715 380 765 400 722 92Z" f="#c6c6c6" s="#999" o={0.6} />
      <L d="M425 710Q450 650 650 640T815 665M440 705Q480 660 650 650M445 715Q470 685 640 675T810 680" s="#9d9d9d" w={2} />
      <ellipse cx="622" cy="705" rx="185" ry="26" fill="#cfcfcf" opacity=".7" transform="rotate(-3 622 705)" />
      <L d="M418 700Q450 728 570 726 740 722 822 680M418 706Q450 735 570 733 740 730 828 684" w={2} />
      <L d="M318 98L418 702M728 78L822 680" w={3} />
      <Dots p="316,97 670,66 674,90 705,77 725,77 418,702 828,680 834,706 440,740" />
      <L d="M388 1012Q430 965 540 945 720 905 860 935L890 945 870 960 940 962 962 985 960 1015Q900 1065 760 1085 620 1105 500 1092L495 1080 400 1050Z" f="#fff" w={3} />
      <L d="M388 1012Q430 965 540 945 720 905 860 935L890 945 870 960 940 962 960 985Q900 1040 780 1055 640 1070 540 1062L500 1056 400 1022Z" f="#d9d9d9" w={2} />
      <L d="M482 975V1008Q560 1045 700 1042 830 1030 860 1000V960" f="#fff" />
      <ellipse cx="672" cy="968" rx="190" ry="46" fill="url(#dish)" stroke="#000" strokeWidth="2" {...V} />
      <ellipse cx="673" cy="996" rx="50" ry="14" fill="#ccc" stroke="#000" strokeWidth="2" {...V} />
      <ellipse cx="675" cy="996" rx="28" ry="9" fill="#ddd" stroke="#000" strokeWidth="4" {...V} />
      <L d="M500 1058V1092" w={4} />
      <Dots p="388,1014 403,1024 403,1050 500,1060 498,1090 478,980 484,1003 503,1025 860,980 858,955 885,945 876,960 938,962 958,980 960,1005" />
      <Base />
    </g>
    <path d="M1152 1583L1180 1592M1226 1621L1256 1640M1320 1684L1362 1712" stroke="#e33" strokeWidth="2" strokeDasharray="2 6" />

    {/* cupola, flue, cone and octagonal glazing */}
    <g transform="translate(1440 180) scale(.33333 .44643)">
      <L d="M80 312L165 270Q215 240 240 195C255 130 290 70 380 58Q460 48 540 60C620 80 675 135 695 195Q720 235 775 262L868 312 860 328 815 348 730 362 660 370 410 372 200 362 150 348 90 330Z" f="#5a5a5a" w={3} />
      <L d="M160 320Q250 280 280 215C300 130 330 75 430 55Q540 55 590 140C620 220 650 280 725 322L728 350 430 358 162 345Z" f="#666" w={2} />
      <L d="M450 60L430 330M430 330V360" w={4} dash="5 1" />
      <L d="M85 312L165 325 430 330 725 320 865 305M150 345L430 358 730 350 815 345" />
      <Dots p="82,312 100,328 150,347 200,360 235,366 415,369 430,330 455,369 665,366 705,360 730,325 735,355 812,347 866,318 162,325 350,70 430,58 500,58 545,62 640,120 685,170 272,130 250,160 295,170" w={5} />
      <L d="M370 440Q400 428 485 428T600 440L612 742 550 752 490 756 388 745Z" f="url(#dark)" w={3} />
      <L d="M468 450L487 750M532 448L548 750" w={3} /><L d="M375 438Q480 455 600 438" />
      <Dots p="372,440 468,452 532,450 598,440 388,745 486,750 548,752 612,743 410,430 490,426 530,428 450,762 574,750" w={8} />
      <L d="M298 790Q340 768 500 766 660 770 708 788L648 1020V1065Q600 1082 500 1084 420 1082 392 1068L385 1010Z" f="#f2f2f2" w={3} />
      <L d="M298 790Q340 768 500 766 660 770 708 788 660 810 500 815 340 812 298 790Z" f="#dedede" w={2} />
      <ellipse cx="505" cy="790" rx="112" ry="13" fill="#fff" stroke="#000" strokeWidth="2" {...V} />
      <L d="M402 812L455 1030H560L608 808Q500 818 402 812Z" f="#fff" s="#fff" />
      <L d="M330 808L395 1020M362 808L435 1020M402 812L440 1025M456 818L495 1025M502 818L504 1028M560 812V1028M606 808L578 1025M648 806L620 1020M678 800L640 1010" s="#333" />
      <L d="M310 800L385 1010M700 795L648 1010" w={4} />
      <L d="M390 1022Q500 1040 645 1018M435 1028V1075M445 1028V1075M498 1032V1080M510 1032V1080M562 1030V1078M572 1030V1078M622 1022V1072" />
      <Dots p="300,792 330,810 362,812 402,816 456,820 502,820 560,814 606,812 648,806 680,800 706,788 390,1022 435,1028 500,1032 565,1030 622,1022 645,1018 392,1065 440,1078 502,1080 570,1078 622,1073 648,1063 318,778 455,782 516,782" w={6} />
      <path d="M498 765L506 795" stroke="#00d" strokeWidth="3" {...V} />
      <L d="M210 1178L310 1140 540 1126 770 1140 838 1175 850 1475 755 1518 720 1525 520 1538 480 1538 300 1525 280 1520 225 1478Z" f="#c4c4c4" w={3} />
      <L d="M210 1178L285 1218 305 1525 225 1478ZM740 1210L838 1175 850 1475 755 1518Z" f="#9a9a9a" w={2} />
      <L d="M262 1210L280 1520M285 1218L305 1525M468 1230L485 1535M508 1230L520 1535M708 1215L722 1525M740 1210L752 1518M775 1200L778 1440" s="#333" w={2} />
      <L d="M320 1215L340 1440M355 1222L365 1425M545 1225L555 1420M580 1222L588 1420M235 1478L340 1438 570 1420 790 1440 850 1472" s="#a2a2a2" w={2} />
      <L d="M210 1178L310 1140 540 1126 770 1140 838 1175 740 1212 510 1226 280 1216Z" f="#cdcdcd" w={3} />
      <L d="M322 1142V1205M350 1140L355 1212M540 1130L545 1222M572 1130L577 1220M745 1142L748 1205M770 1145L772 1195" s="#333" />
      <Dots p="210,1178 320,1142 350,1138 540,1130 572,1132 745,1142 775,1142 836,1175 262,1212 287,1218 465,1228 510,1228 705,1215 738,1210 228,1480 285,1520 305,1524 484,1536 522,1536 720,1524 754,1516 850,1474" w={7} />
      <path d="M518 1090L523 1225M543 1540L545 1568" stroke="#22d" strokeWidth="1.500" {...V} />
    </g>

    {/* diffuser, LED board, lower plate and lantern house */}
    <g transform="translate(1440 860) scale(.33333 .38265)">
      <path d="M270 765L375 705 560 670 790 692 820 700 882 760V785L795 845 745 858 545 880 350 852 322 840Z" fill="#fff" stroke="#000" strokeWidth="2" {...V} />
      <L d="M275 762L375 705 790 692 880 762 790 830 560 862 330 832Z" f="#d4d4d4" />
      <L d="M362 720V778Q420 828 570 830 740 825 788 765V715Z" f="#fff" w={2} />
      <ellipse cx="577" cy="722" rx="208" ry="58" fill="#fff" stroke="#000" strokeWidth="3" {...V} />
      <path d="M415 760Q570 690 735 750Q660 780 575 781Q470 780 415 760Z" fill="#e6e6e4" stroke="#000" strokeWidth="2" {...V} />
      <L d="M385 748Q560 665 760 740" w={2} />
      <path d="M577 700V778" stroke="#22d" strokeWidth="1.500" {...V} />
      <Dots p="272,765 278,785 368,708 365,728 790,694 785,718 880,758 878,784 325,828 325,842 355,840 352,855 518,860 525,876 570,860 565,876 745,838 748,854 795,828 790,842" w={6} />
      <path d="M380 625Q380 690 570 692 765 685 765 620Z" fill="#00e500" stroke="#000" strokeWidth="3" {...V} />
      <ellipse cx="572" cy="610" rx="190" ry="62" fill="#3c3c3c" stroke="#000" strokeWidth="3" {...V} />
      <path d="M480 600Q570 560 660 600L630 640H510Z" fill="#00c400" />
      <rect x="545" y="620" width="18" height="35" fill="#00c400" />
      {[[478, 560], [545, 555], [622, 555], [683, 562]].map(([x, y]) => led(x, y, 0.9))}
      {[[428, 580], [722, 580], [415, 600], [718, 602]].map(([x, y]) => led(x, y, 0.9))}
      {[[448, 626], [515, 638], [593, 638], [667, 625]].map(([x, y]) => led(x, y))}
      <L d="M325 140L335 475Q380 525 560 528 740 525 792 470L780 130Z" f="url(#white)" w={2} />
      <ellipse cx="554" cy="130" rx="228" ry="53" fill="url(#white)" stroke="#000" strokeWidth="2" {...V} />
      <path d="M544 20V108L550 110V182M566 532L573 610" stroke="#22d" strokeWidth="1.500" fill="none" {...V} />
      <Dots p="325,143 775,128" w={8} /><Dots p="792,462" w={4} />

      <L d="M378 1305Q450 1262 530 1260L640 1247Q800 1260 882 1328L845 1355Q780 1315 640 1312 450 1315 382 1375Z" f="#f50000" w={3} />
      <L d="M385 1315Q560 1235 780 1285" /><L d="M440 1345l10-22 20 8 12-20" w={6} />
      <L d="M438 1222L620 1205 780 1222V1262L640 1247 540 1262 440 1270Z" f="#fff" /><L d="M440 1235L620 1215 780 1232" />
      <L d="M385 925L420 920 438 1270 405 1280ZM600 900H640L655 1245 612 1250ZM805 925L830 925 865 1280 835 1240Z" f="#fff" w={2} />
      <L d="M395 940L405 1270M650 900L660 1200M600 900L608 1240" w={3} />
      <L d="M415 925L600 895V940L420 965ZM640 895L805 920V965L650 940Z" f="#fff" w={2} />
      <L d="M248 1000L380 915 400 935 290 1000 345 1062 312 1085Z" f="#cfcfcf" w={2} />
      <L d="M932 1000L855 915 825 930 890 1000 800 1068 825 1088Z" f="#cfcfcf" w={2} />
      <L d="M290 1000L395 935V985L310 1025ZM890 1000L830 935V985L870 1015Z" f="#e8e8e8" w={2} />
      <L d="M380 915L620 888 855 915" w={3} />
      <L d="M252 1040L290 1075 312 1325 270 1328ZM890 1068L932 1045 940 1330 905 1325Z" f="#fff" w={3} />
      <L d="M835 1100L865 1085 890 1320 845 1345Z" f="#fff" w={2} /><L d="M850 1090L870 1240M310 1090L325 1410" w={4} />
      <L d="M260 1320L330 1385V1420L275 1345ZM940 1325L845 1380V1415L938 1350Z" f="#d4d4d4" w={2} />
      <path d="M312 1080L345 1065 553 1095 800 1065 825 1080 838 1420 568 1465 335 1425ZM345 1125L365 1405 540 1440 528 1155 510 1145ZM585 1150L605 1440 790 1405 778 1125Z" fill="#fff" fillRule="evenodd" stroke="#000" strokeWidth="2" {...V} />
      <L d="M345 1128L375 1135 385 1395 535 1425M778 1128L768 1135 775 1395 605 1428M550 1115L568 1462M815 1090L825 1415" />
      <L d="M372 1135V1400M378 1135V1400M530 1160L540 1435M590 1155L600 1435" w={3} />
      <L d="M312 1085L553 1112 825 1088" w={2} />
      <L d="M268 1345L335 1425 568 1465 825 1420 940 1345Q925 1395 830 1440 700 1488 570 1490 400 1475 320 1425 272 1385 268 1345Z" f="#e50000" w={3} />
      <Dots p="248,1000 932,1000 312,1082 820,1085 553,1105 380,918 420,925 600,898 640,898 800,920 850,918 392,975 425,965 645,945 800,965 828,975 290,1000 890,998 345,1125 520,1155 590,1150 775,1128 370,1405 540,1438 605,1438 785,1405 335,1425 568,1462 825,1420 268,1328 940,1330 250,1030 922,1045 655,1205 612,1205 825,1195" w={7} />
      <path d="M586 885V1010M592 1010L595 1090" stroke="#22d" strokeWidth="2" fill="none" {...V} />
      <path d="M597 1165L605 1415" stroke="#00d" strokeWidth="3" {...V} />
    </g>

    {/* tower, door and step */}
    <g transform="translate(1440 1400) scale(.33333 .40816)">
      <L d="M318 185L300 1330C340 1470 930 1513 1043 1225L914 150Z" f="#f00" w={4} />
      <L d="M318 185L303 1085C335 1235 930 1250 1015 1045L914 150Z" f="#fff" />
      <L d="M318 185L308 860C340 1000 920 1013 990 820L914 150Z" f="#f00" />
      <L d="M318 185L313 630C340 760 900 770 962 597L914 150Z" f="#fff" />
      <L d="M318 185L316 400C340 510 870 520 937 360L914 150Z" f="#f00" />
      <L d="M318 185L300 1330C340 1470 930 1513 1043 1225L914 150Z" f="url(#shade)" w={3} />
      <L d="M450 1408Q640 1450 830 1405 940 1370 1000 1315" w={2} />
      <g transform="rotate(-2 616 168)">
        <ellipse cx="616" cy="168" rx="298" ry="104" fill="#e30000" stroke="#000" strokeWidth="3" {...V} />
        <ellipse cx="616" cy="168" rx="265" ry="88" fill="#cf0000" stroke="#000" strokeWidth="1.500" {...V} />
        <ellipse cx="616" cy="172" rx="250" ry="84" fill="#ee0000" stroke="#000" strokeWidth="1" {...V} />
        <ellipse cx="617" cy="186" rx="233" ry="71" fill="url(#white)" stroke="#000" strokeWidth="2" {...V} />
      </g>
      <L d="M500 75Q620 68 760 78" w={6} />
      <L d="M430 95h60v-15M435 100v22h55V85" w={4} /><Dots p="318,180 350,176 880,154 912,150 430,95 490,100 455,122 485,80" w={5} />
      <L d="M740 235l30-6v-8l14 2 8-12 10 12 14-4" w={5} />
      <path d="M613 88V150L619 152V255" stroke="#22d" strokeWidth="1.500" fill="none" {...V} />
      <L d="M312 1090Q330 1065 360 1065 450 1090 455 1180V1395L425 1400 318 1318Z" f="#f4f4f4" w={3} />
      <L d="M328 1130Q330 1100 352 1095 415 1120 418 1180L425 1370 335 1318Z" f="#fff" w={4} />
      <L d="M360 1100L370 1300 425 1340M335 1120H352M440 1180V1395M348 1082Q430 1100 440 1185" />
      <L d="M282 1325L370 1305 450 1385 412 1400Z" f="#cfcfcf" w={2} />
      <L d="M284 1328L410 1400V1432L288 1360ZM410 1400L452 1385V1412L410 1430Z" f="#fff" w={3} />
      <L d="M303 1085V1310" w={5} />
      <Dots p="285,1330 290,1358 340,1320 375,1308 425,1368 412,1400 412,1432 330,1130 345,1100 415,1185 440,1188 448,1390" w={6} />
      <L d="M75 1235Q78 1205 115 1195 175 1205 185 1270L200 1470 170 1485 88 1430Z" f="#0000f5" w={4} />
      <L d="M105 1200Q155 1225 162 1285L172 1480M165 1280L185 1270" w={2} />
      <Dots p="75,1238 85,1210 118,1193 185,1272 157,1282 88,1432 170,1485 202,1468" w={7} />
      <circle cx="153" cy="1381" r="6" fill="#ddd" />
    </g>
    <Porthole x={1714} y={1579} />
    <Porthole x={1726} y={1728} />
    <Porthole x={1736} y={1868} see />
    <path d="M1721 1877L1744 1866" stroke="#3ccf3c" strokeWidth="1.500" />
    <Disc x={1862} y={1657} />
    <Disc x={1872} y={1812} />
    <Disc x={1881} y={1959} />
  </svg>
);

/* ---------- outliner ---------- */
type TreeKind = "leaf" | "plus" | "minus";
const Gutter = ({ kind, first, last, through }: { kind?: TreeKind; first?: boolean; last?: boolean; through?: boolean }) => (
  <svg width={through ? 33 : 34} height="28" viewBox={`0 0 ${through ? 33 : 34} 28`}>
    <path d={`M14 ${first ? 2 : 0}V${last ? 14 : 28}`} stroke="#888" strokeDasharray="1 2" />
    {!through && <path d="M14 14H34" stroke="#888" strokeDasharray="1 2" />}
    {kind && kind !== "leaf" && (<>
      <rect x="6" y="6" width="15" height="15" fill="#fff" stroke="#888" strokeWidth="2" />
      <path d={kind === "plus" ? "M9 13.500h9M13.500 9v9" : "M9 13.500h9"} stroke="#111" strokeWidth="2" />
    </>)}
  </svg>
);
const nodes: { t: string; k: TreeKind; deep?: boolean; last?: boolean }[] = [
  { t: "Base (New)", k: "leaf" },
  { t: "Cupola", k: "leaf" },
  { t: "Lower Light Plate", k: "plus" },
  { t: "Octagonal Windows Clear Vase Mode", k: "leaf" },
  { t: "PCB Lightholder", k: "plus" },
  { t: "Tower 2 Piece", k: "minus" },
  { t: "Door", k: "leaf", deep: true },
  { t: "Lantern House", k: "leaf", deep: true },
  { t: "Lower Body w Cable", k: "leaf", deep: true, last: true },
  { t: "Window Glazing", k: "leaf" },
  { t: "XX Optional Parts", k: "plus", last: true },
];
const swatches = [
  "#ffffff", "#e1e1e1", "#c6c6c6", "#aaaaaa", "#8e8e8e", "#717171", "#555555", "#393939",
  "#1e1e1e", "#000000", "#ff0000", "#ff3333", "#ff6666", "#ff9999", "#ffcccc", "#cc0000",
  "#cb2727", "#cc5252", "#cb7a7a", "#c9a3a3", "#990000", "#981d1d", "#983c3c", "#995b5b",
];
const rail: (string[] | "rule" | "grip")[] = [
  ["arrow", "component"], ["paint", "eraser"], "rule",
  ["rect", "pencil"], ["circle", "arc"], ["poly", "freehand"], "rule",
  ["move", "push"], ["rotate", "follow"], ["scale", "offset"], "rule",
  ["tape", "dimension"], ["protractor", "text"], ["axes", "text3d"], "rule",
  ["orbit", "pan"], ["zoom", "zoomExt"], ["prev", "next"], "rule",
  ["person", "eye"], ["foot", "section"], "grip",
  ["xray", "backEdges"], "rule",
  ["wire", "hidden"], ["shaded", "textured"], ["mono"], "grip",
  ["outer"], "rule", ["s1", "s2"], ["s3", "s4"], ["s5"],
];
const StatusIcon = ({ k }: { k: string }) => (
  <svg width="36" height="36" viewBox="0 0 36 36">
    <circle cx="18" cy="18" r="16" fill={k === "?" ? "#d5e6fb" : "#ecdfb4"} stroke={k === "?" ? "#2c5c7c" : "#8a5e1c"} strokeWidth="3" />
    {k === "pin" && <><circle cx="18" cy="13" r="5" fill="#f7a593" stroke="#b98" /><path d="M18 18v11" stroke="#a98" strokeWidth="3" /></>}
    {k === "man" && <><circle cx="18" cy="9" r="3" /><path d="M13 13h10v9h-2v8h-6v-8h-2z" /></>}
    {k === "G" && <text x="18" y="27" fontSize="26" textAnchor="middle" fontFamily="Liberation Serif" fill="#776a4c">G</text>}
    {k === "?" && <text x="18" y="27" fontSize="25" fontWeight="700" textAnchor="middle" fontFamily="Liberation Sans">?</text>}
  </svg>
);

export default function App() {
  return (
    <Shell>
      <Global />
      <TitleBar>
        <svg width="24" height="28" viewBox="0 0 24 28"><path d="M1 3L15 0l9 5-2 18-15 5-5-4z" fill="#e5262c" /><path d="M5 9l10-3M5 14l8-2v4l-7 2M6 22l8-2" stroke="#fff" strokeWidth="2.500" fill="none" /></svg>
        <Title>My Lighthouse Design 1m3 (Exploded).skp - SketchUp</Title>
        <WinButton aria-label="Minimize"><svg width="14" height="14"><path d="M0 7h14" stroke="#222" strokeWidth="1.500" /></svg></WinButton>
        <WinButton aria-label="Restore"><svg width="15" height="15" viewBox="0 0 15 15" fill="none" stroke="#222" strokeWidth="1.500"><rect x="1" y="4" width="10" height="10" rx="2" /><path d="M4 4V3a2 2 0 012-2h5a3 3 0 013 3v5a2 2 0 01-2 2" /></svg></WinButton>
        <WinButton aria-label="Close"><svg width="14" height="14" viewBox="0 0 14 14"><path d="M1 1l12 12M13 1L1 13" stroke="#222" strokeWidth="1.500" /></svg></WinButton>
      </TitleBar>
      <MenuBar>
        {["File", "Edit", "View", "Camera", "Draw", "Tools", "Window", "Help"].map((m) => <MenuItem key={m}>{m}</MenuItem>)}
      </MenuBar>
      <ToolStrip>
        <ToolGroup>
          <Grip />
          <Combo $w={191}>
            <Check><svg width="20" height="18" viewBox="0 0 20 18"><path d="M1 9l5 6L18 2" fill="none" stroke="#000" strokeWidth="3" /></svg></Check>
            <ComboSelect aria-label="Layer" defaultValue="Layer0"><option>Layer0</option></ComboSelect>
            <ComboArrow><Arrow /></ComboArrow>
          </Combo>
          <Spacer />
          <Tool n="layers" />
        </ToolGroup>
        <EmptyDock />
        <ToolGroup>
          <Grip />
          <Tool n="newDoc" /><Tool n="open" /><Tool n="save" /><Divider />
          <Tool n="cut" /><Tool n="copy" /><Tool n="paste" /><Tool n="del" /><Divider />
          <Tool n="undo" /><Tool n="redo" /><Divider /><Tool n="print" /><Divider /><Tool n="info" />
        </ToolGroup>
        <ToolGroup>
          <Grip />
          {["iso", "top", "front", "right", "back", "left"].map((n) => <Tool key={n} n={n} />)}
        </ToolGroup>
        <ToolGroup><Grip /><Tool n="person" /><Tool n="foot" /><Tool n="eye" /></ToolGroup>
        <ToolGroup>
          <Grip />
          <Tool n="shadowInfo" /><Tool n="shadow" />
          <SliderBlock $gap={16}>
            <Slider type="range" aria-label="Date" defaultValue={82} $grad="#fffaf0, #f3c46a 18%, #f2b600 35%, #ff6a00 52%, #ff0000 68%, #ff4040 80%, #ffe8e8" />
            <SliderScale>{"JFMAMJJASOND".split("").map((c, i) => <span key={i}>{c}</span>)}</SliderScale>
          </SliderBlock>
          <SliderBlock $gap={19}>
            <Slider type="range" aria-label="Time" defaultValue={64} $grad="#f7f9fb, #8fb6d4 35%, #6a80e8 62%, #3f52ee 72%, #000" />
            <SliderScale><span>06:31 AM</span><span>Noon</span><span>04:57 PM</span></SliderScale>
          </SliderBlock>
          <Spacer />
        </ToolGroup>
        <ToolGroup><Grip /><Tool n="interact" /><Tool n="attrs" /><Tool n="outline" /></ToolGroup>
      </ToolStrip>
      <Workspace>
        <Rail>
          <RailTop />
          <RailGrip />
          {rail.map((r, i) =>
            r === "rule" ? <RailRule key={i} /> : r === "grip" ? <RailGrip key={i} /> : (
              <RailRow key={i}>
                {r.map((n) => <RailButton key={n} aria-label={n} $on={n === "pan" || n === "textured"}><Icon n={n} /></RailButton>)}
                {r[0] === "outer" && <RailBar />}
              </RailRow>
            )
          )}
          <RailEnd />
        </Rail>
        <Canvas><Scene /></Canvas>
      </Workspace>
      <StatusBar>
        <StatusButton aria-label="Geo-location"><StatusIcon k="pin" /></StatusButton>
        <StatusButton aria-label="Credits"><StatusIcon k="man" /></StatusButton>
        <StatusButton aria-label="Google"><StatusIcon k="G" /></StatusButton>
        <StatusDivider />
        <StatusButton aria-label="Instructor"><StatusIcon k="?" /></StatusButton>
        <Hint>Drag in direction to pan</Hint>
        <Measure>Measurements<MeasureInput /></Measure>
      </StatusBar>

      <Palettes>
        <Palette $h={833} aria-label="Outliner">
          <PaletteHead><PaletteTitle>Outliner</PaletteTitle><Close aria-label="Close"><CloseMark /></Close></PaletteHead>
          <FilterRow>
            <FilterLabel>Filter:<Field type="text" /></FilterLabel>
            <button aria-label="Details"><Details /></button>
          </FilterRow>
          <Tree>
            <Root>
              <svg width="20" height="20" viewBox="0 0 20 20"><rect x="1" y="1" width="18" height="18" fill="#fff" stroke="#111" strokeWidth="2" /><path d="M5 10l5-5 5 5M6 10v6h8v-6M9 16v-4h2v4" fill="none" stroke="#111" strokeWidth="1.500" /></svg>
              My Lighthouse Design 1m3 (Exploded)
            </Root>
            {nodes.map((n, i) => (
              <Node key={n.t}>
                {n.deep && <Gutter through />}
                <Gutter kind={n.k} last={n.last} first={i === 0} />
                <Bullet />{n.t}
              </Node>
            ))}
          </Tree>
        </Palette>
        <Palette $h={786} aria-label="Materials">
          <PaletteHead><PaletteTitle>Materials</PaletteTitle><Close aria-label="Close"><CloseMark /></Close></PaletteHead>
          <MatTop>
            <Preview><Split /></Preview>
            <NameSlot><Field $off aria-label="Material name" defaultValue="Default" readOnly /></NameSlot>
            <SideIcons>
              <button aria-label="Secondary pane"><svg width="24" height="35" viewBox="0 0 24 35"><path d="M1 1h22v33H1z" fill="#fff" stroke="#999" strokeWidth="2" /><path d="M5 5h14l-7 8z" /><path d="M1 16h22v18H1z" /><path d="M12 19v12M6 25h12" stroke="#fff" strokeWidth="4" /></svg></button>
              <button aria-label="Create material"><svg width="32" height="35" viewBox="0 0 32 35"><path d="M5 6L16 1l15 4-1 18-11 7-13-4z" fill="#2b261c" /><path d="M8 6l14 5M12 4l14 4M20 14l10-5M20 19l10-5M19 25l10-6" stroke="#b5a67c" strokeWidth="2" /><circle cx="11" cy="24" r="9" fill="#fff" stroke="#111" strokeWidth="2" /><path d="M11 18v12M5 24h12" stroke="#111" strokeWidth="3" /></svg></button>
              <MiniSplit aria-label="Default material"><Split /></MiniSplit>
            </SideIcons>
          </MatTop>
          <Tabs>
            <Tab $on>Select</Tab><Tab>Edit</Tab>
            <Dropper aria-label="Sample paint"><svg width="32" height="34" viewBox="0 0 32 34"><path d="M4 32q14-4 26-8" stroke="#aaa" strokeWidth="3" fill="none" /><path d="M2 31l2-8 12-12 4 4L8 28z" fill="#fff" stroke="#444" strokeWidth="1.500" /><path d="M2 31l2-8 6 3-2 3z" fill="#f07a1a" /><path d="M13 10l4-3c1-8 10-8 9 0-1 5-4 6-6 10z" /></svg></Dropper>
          </Tabs>
          <NavRow>
            <button aria-label="Back"><svg width="28" height="32" viewBox="0 0 28 32"><path d="M3 16L16 4v7h9v10h-9v7z" fill="#fff" stroke="#909090" strokeWidth="3" /></svg></button>
            <button aria-label="Forward"><svg width="28" height="32" viewBox="0 0 28 32"><path d="M25 16L12 4v7H3v10h9v7z" fill="#fff" stroke="#909090" strokeWidth="3" /></svg></button>
            <button aria-label="In model"><svg width="28" height="30" viewBox="0 0 28 30"><path d="M4 15v13h20V15L14 4z" fill="#fff" stroke="#000" strokeWidth="3" /><path d="M1 15L14 2l13 13" fill="none" stroke="#000" strokeWidth="3.500" /><path d="M11 17h6v11h-6zM5 2h4v6H5z" /></svg></button>
            <Combo>
              <ComboSelect aria-label="Library" defaultValue="Colors"><option>Colors</option></ComboSelect>
              <ComboArrow><Arrow /></ComboArrow>
            </Combo>
            <button aria-label="Details"><Details /></button>
          </NavRow>
          <SwatchArea>
            <SwatchGrid>{swatches.map((c) => <Swatch key={c} $c={c} aria-label={c} />)}</SwatchGrid>
            <Scroll />
          </SwatchArea>
        </Palette>
      </Palettes>
    </Shell>
  );
}
